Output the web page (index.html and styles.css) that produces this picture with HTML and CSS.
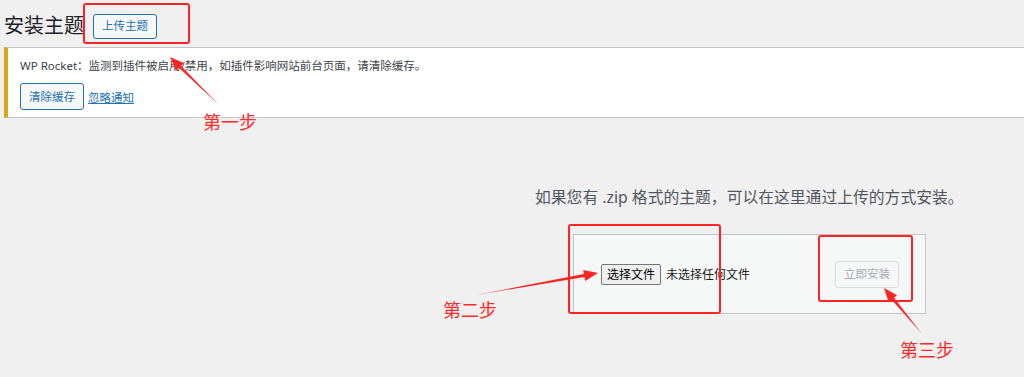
FILE: index.html
```html
<!DOCTYPE html>
<html lang="zh-CN">
<head>
<meta charset="UTF-8">
<title>安装主题</title>
<link rel="stylesheet" href="styles.css">
</head>
<body>

<div class="wrap">

    <div class="page-head">
        <h1 class="page-title">安装主题</h1>
        <button class="btn btn-outline">上传主题</button>
    </div>

    <div class="notice">
        <p class="notice-text">WP Rocket：监测到插件被启用/禁用，如插件影响网站前台页面，请清除缓存。</p>
        <div class="notice-actions">
            <button class="btn btn-outline btn-small">清除缓存</button>
            <a href="#" class="notice-link">忽略通知</a>
        </div>
    </div>

    <div class="upload">
        <p class="upload-help">如果您有 .zip 格式的主题，可以在这里通过上传的方式安装。</p>
        <div class="upload-form">
            <div class="file-field">
                <span class="file-btn">选择文件</span>
                <span class="file-name">未选择任何文件</span>
            </div>
            <button class="btn btn-disabled" disabled>立即安装</button>
        </div>
    </div>

</div>

<!-- 标注 -->
<div class="marks">
    <div class="mark-box box-1"></div>
    <div class="mark-box box-2"></div>
    <div class="mark-box box-3"></div>

    <span class="mark-label label-1">第一步</span>
    <span class="mark-label label-2">第二步</span>
    <span class="mark-label label-3">第三步</span>

    <svg class="mark-arrows" width="1024" height="377" viewBox="0 0 1024 377">
        <polygon points="218,104 181.05,65.73 183.8,62.9 170,57 176.2,70.7 178.95,67.87"/>
        <polygon points="476,295 584.5,277 585.2,280.9 598,273 583.2,270.1 583.9,274"/>
        <polygon points="922,334 894.1,297.8 897.1,295.3 884,288 888.7,302.3 891.7,299.8"/>
    </svg>
</div>

</body>
</html>
```

FILE: styles.css
```css
*{
    box-sizing:border-box;
}

body{
    margin:0;
    width:1024px;
    height:377px;
    overflow:hidden;
    position:relative;
    background:#f0f0f1;
    color:#3c434a;
    font-family:"Noto Sans", "Noto Sans CJK SC", sans-serif;
}

.wrap{
    padding-left:4px;
}

/* 标题 */
.page-head{
    display:flex;
    align-items:center;
    gap:9px;
    padding-top:12px;
    height:40px;
}

.page-title{
    margin:0;
    font-size:20px;
    font-weight:400;
    color:#1d2327;
    line-height:26px;
}

.btn{
    font-family:inherit;
    font-size:11.5px;
    line-height:1;
    border-radius:3px;
    padding:0 8px;
    height:25px;
    cursor:pointer;
}

.btn-outline{
    background:#f6f7f7;
    border:1px solid #2271b1;
    color:#2271b1;
}

.btn-small{
    height:27px;
}

.btn-disabled{
    height:27px;
    background:#f6f7f7;
    border:1px solid #dcdcde;
    color:#a7aaad;
    cursor:default;
}

/* 提示 */
.notice{
    margin-top:7px;
    background:#fff;
    border-top:1px solid #c3c4c7;
    border-bottom:1px solid #c3c4c7;
    border-left:4px solid #dba617;
    padding:10px 12px 7px 12px;
    height:71px;
}

.notice-text{
    margin:0;
    font-size:11.5px;
    line-height:16px;
    color:#3c434a;
}

.notice-actions{
    margin-top:9px;
    display:flex;
    align-items:flex-end;
    gap:4px;
}

.notice-link{
    font-size:11.5px;
    color:#2271b1;
    line-height:16px;
    margin-bottom:4px;
}

/* 上传 */
.upload{
    margin-top:68px;
    margin-left:531px;
    width:440px;
}

.upload-help{
    margin:0;
    font-size:15.8px;
    line-height:22px;
    color:#50575e;
}

.upload-form{
    margin-top:26px;
    margin-left:38px;
    width:353px;
    height:80px;
    background:#f6f7f7;
    border:1px solid #c3c4c7;
    display:flex;
    align-items:center;
    justify-content:space-between;
    padding:0 26px 0 27px;
}

.file-field{
    display:flex;
    align-items:center;
    gap:5px;
    font-size:12px;
    color:#222;
}

.file-btn{
    display:inline-flex;
    align-items:center;
    height:21px;
    padding:0 5px;
    background:#efefef;
    border:1px solid #767676;
    border-radius:2px;
    color:#000;
}

/* 红色标注 */
.marks{
    position:absolute;
    inset:0;
    pointer-events:none;
}

.mark-box{
    position:absolute;
    border:2px solid #ff2424;
    border-radius:3px;
}

.box-1{ left:83px;  top:3px;   width:107px; height:41px; }
.box-2{ left:568px; top:224px; width:153px; height:90px; }
.box-3{ left:818px; top:235px; width:95px;  height:67px; }

.mark-label{
    position:absolute;
    font-family:"Noto Sans CJK SC", sans-serif;
    font-size:18px;
    line-height:20px;
    color:#ff2a2a;
}

.label-1{ left:203px; top:111px; }
.label-2{ left:443px; top:299px; }
.label-3{ left:900px; top:339px; }

.mark-arrows{
    position:absolute;
    left:0;
    top:0;
}

.mark-arrows polygon{
    fill:#ff2424;
}
```
